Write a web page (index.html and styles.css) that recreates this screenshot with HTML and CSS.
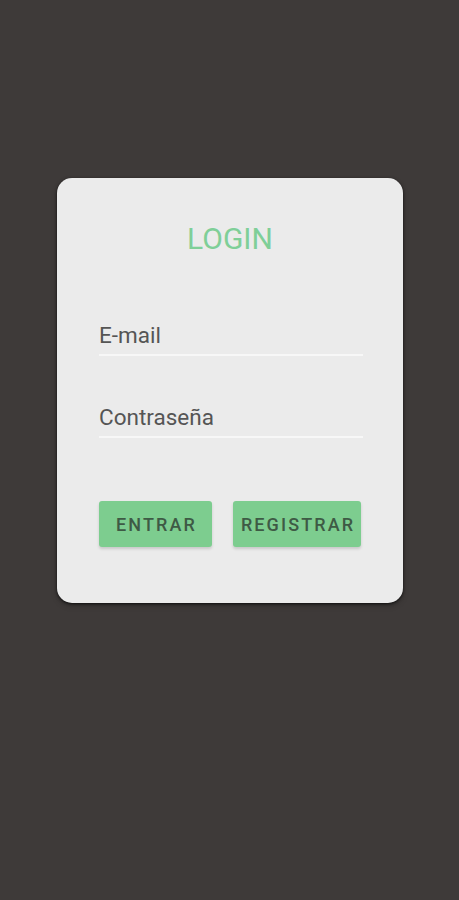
FILE: index.html
```html
<!DOCTYPE html>
<html lang="es">
<head>
    <meta charset="UTF-8">
    <meta name="viewport" content="width=device-width, initial-scale=1.0">
    <title>Login</title>
    <link rel="stylesheet" href="styles.css">
</head>
<body>
<div class="pantalla">
    <div class="tarjeta">
        <h1 class="titulo">LOGIN</h1>
        <div class="campo"><span>E-mail</span></div>
        <div class="campo"><span>Contraseña</span></div>
        <div class="botones">
            <button class="boton entrar">ENTRAR</button>
            <button class="boton registrar">REGISTRAR</button>
        </div>
    </div>
</div>
</body>
</html>
```

FILE: styles.css
```css
html, body {
    margin: 0;
    padding: 0;
    background: #3e3a39;
    font-family: Roboto, "Noto Sans", sans-serif;
}
.pantalla {
    height: 900px;
    padding-top: 178px;
    box-sizing: border-box;
}
.tarjeta {
    width: 346px;
    height: 425px;
    margin-left: 57px;
    box-sizing: border-box;
    background: #ebebeb;
    border-radius: 15px;
    box-shadow: 0 1px 3px rgba(0, 0, 0, 0.7), 0 3px 6px rgba(0, 0, 0, 0.2);
    padding: 43px 40px 0 42px;
}
.titulo {
    margin: 0;
    text-align: center;
    font-size: 30px;
    font-weight: 400;
    color: #7fcf98;
    line-height: 36px;
    padding-right: 2px;
}
.campo {
    color: #555;
    font-size: 22.5px;
    height: 34px;
    line-height: 30px;
    border-bottom: 2px solid #f7f7f7;
    margin-top: 63px;
}
.campo + .campo {
    margin-top: 46px;
}
.botones {
    display: flex;
    gap: 21px;
    margin-top: 63px;
}
.boton {
    height: 46px;
    border: none;
    border-radius: 3px;
    background: #7dcd8f;
    color: #3e5a45;
    font-family: Roboto, "Noto Sans", sans-serif;
    font-size: 18px;
    font-weight: 500;
    letter-spacing: 2.1px;
    box-shadow: 0 2px 3px rgba(0, 0, 0, 0.15);
    padding: 0 0 0 2px;
}
.entrar {
    width: 113px;
}
.registrar {
    width: 128px;
}
```
